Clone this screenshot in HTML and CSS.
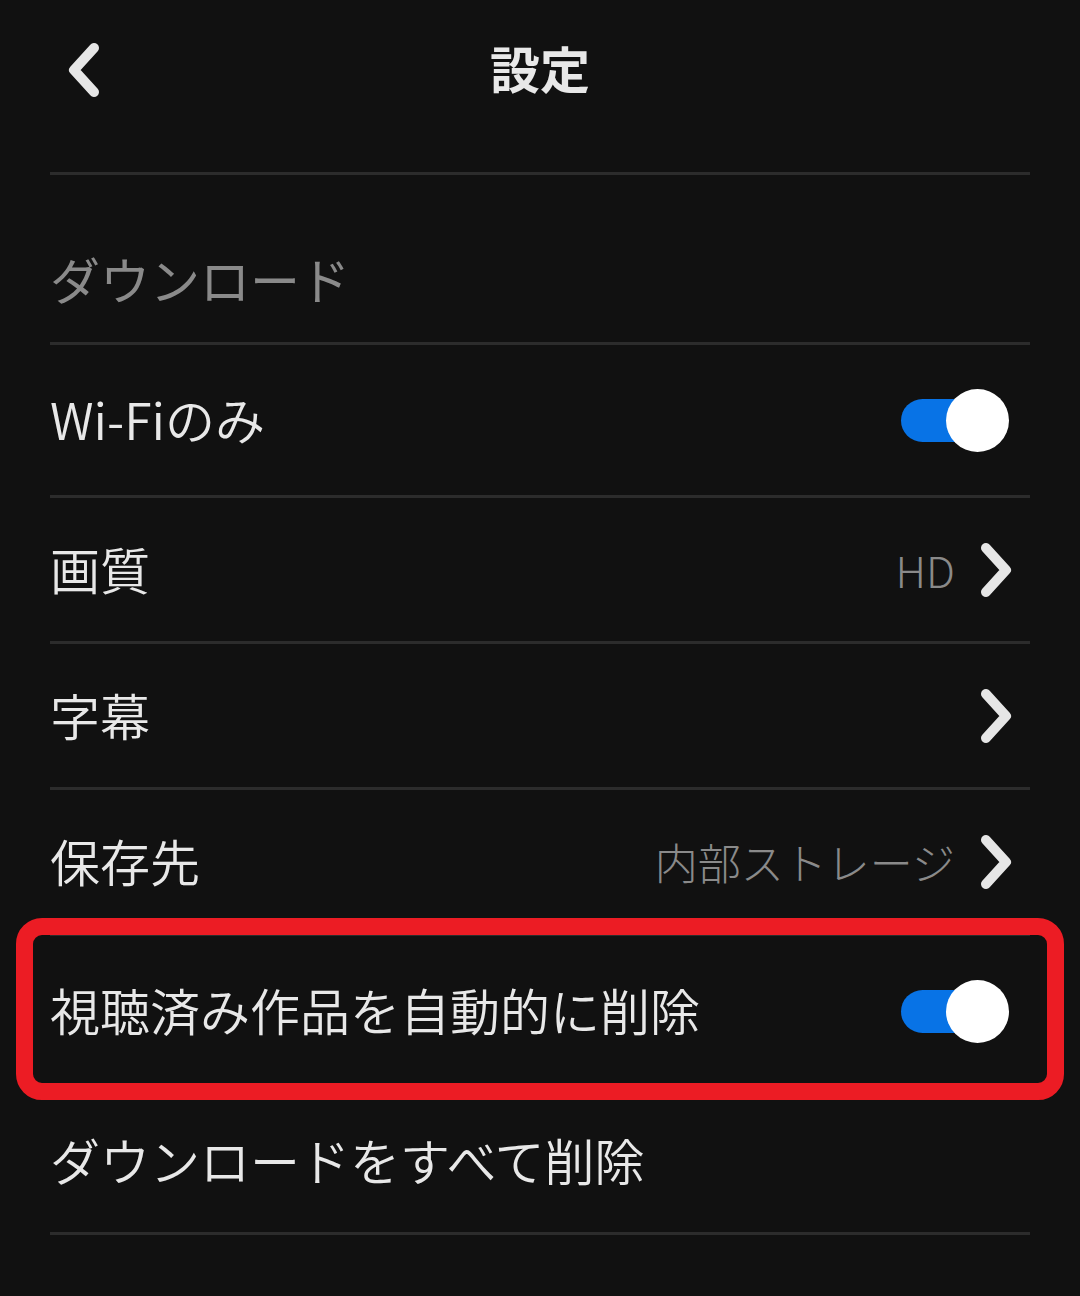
FILE: index.html
```html
<!DOCTYPE html>
<html lang="ja">
<head>
    <meta charset="UTF-8">
    <meta name="viewport" content="width=device-width, initial-scale=1.0">
    <title>設定</title>
    <link rel="stylesheet" href="styles.css">
</head>
<body>

<div class="header">
    <span class="back">
        <svg width="34" height="56" viewBox="0 0 34 56"><path d="M27 6 L7 28 L27 50" fill="none" stroke="#e6e6e6" stroke-width="10" stroke-linecap="round" stroke-linejoin="round"/></svg>
    </span>
    <h1>設定</h1>
    <span></span>
</div>

<div class="list">
    <div class="section">ダウンロード</div>

    <div class="row toggle-row">
        <span class="label">Wi-Fiのみ</span>
        <span class="switch on"><span class="knob"></span></span>
    </div>

    <div class="row">
        <span class="label">画質</span>
        <span class="value">HD</span>
        <span class="chevron">
            <svg width="34" height="56" viewBox="0 0 34 56"><path d="M7 6 L27 28 L7 50" fill="none" stroke="#e6e6e6" stroke-width="10" stroke-linecap="round" stroke-linejoin="round"/></svg>
        </span>
    </div>

    <div class="row">
        <span class="label">字幕</span>
        <span class="chevron">
            <svg width="34" height="56" viewBox="0 0 34 56"><path d="M7 6 L27 28 L7 50" fill="none" stroke="#e6e6e6" stroke-width="10" stroke-linecap="round" stroke-linejoin="round"/></svg>
        </span>
    </div>

    <div class="row">
        <span class="label">保存先</span>
        <span class="value">内部ストレージ</span>
        <span class="chevron">
            <svg width="34" height="56" viewBox="0 0 34 56"><path d="M7 6 L27 28 L7 50" fill="none" stroke="#e6e6e6" stroke-width="10" stroke-linecap="round" stroke-linejoin="round"/></svg>
        </span>
    </div>

    <div class="row toggle-row highlighted">
        <span class="label">視聴済み作品を自動的に削除</span>
        <span class="switch on"><span class="knob"></span></span>
    </div>

    <div class="row last">
        <span class="label">ダウンロードをすべて削除</span>
    </div>
</div>

</body>
</html>
```

FILE: styles.css
```css
body {
    margin: 0;
    background: #111111;
    color: #e8e8e8;
    font-family: "Noto Sans CJK JP", "Noto Sans", sans-serif;
}
.header {
    height: 172px;
    box-sizing: border-box;
    padding: 0 67px 38px 67px;
    display: grid;
    grid-template-columns: 1fr auto 1fr;
    align-items: center;
}
.back {
    display: flex;
    margin-top: 6px;
}
h1 {
    margin: 0;
    font-size: 50px;
    font-weight: 700;
    line-height: 60px;
    color: #e8e8e8;
}
.list {
    margin: 0 50px;
}
.section {
    height: 170px;
    box-sizing: border-box;
    border-top: 3px solid #2c2c2c;
    padding-top: 73px;
    font-size: 50px;
    font-weight: 400;
    line-height: 60px;
    color: #8a8a8a;
}
.row {
    position: relative;
    height: 146px;
    box-sizing: border-box;
    border-top: 3px solid #2c2c2c;
    padding-right: 17px;
    display: flex;
    align-items: center;
}
.toggle-row {
    height: 153px;
}
.row.last {
    height: 149px;
    border-bottom: 3px solid #2c2c2c;
}
.label {
    flex: 1;
    font-size: 50px;
    font-weight: 350;
    line-height: 60px;
    padding-bottom: 4px;
}
.value {
    font-size: 43px;
    font-weight: 300;
    color: #8a8a8a;
    margin-right: 24px;
    padding-bottom: 2px;
}
.chevron {
    display: flex;
}
.switch {
    position: relative;
    width: 108px;
    height: 63px;
    margin-right: 4px;
}
.switch::before {
    content: "";
    position: absolute;
    left: 0;
    top: 10px;
    width: 98px;
    height: 43px;
    border-radius: 22px;
    background: #5a5a5a;
}
.switch.on::before {
    background: #0873e6;
}
.knob {
    position: absolute;
    right: 0;
    top: 0;
    width: 63px;
    height: 63px;
    border-radius: 50%;
    background: #ffffff;
}
.highlighted {
    z-index: 1;
}
.highlighted::after {
    content: "";
    position: absolute;
    top: -18px;
    bottom: -14px;
    left: -34px;
    right: -34px;
    border: 17px solid #ec1c24;
    border-radius: 26px;
    pointer-events: none;
}
```
